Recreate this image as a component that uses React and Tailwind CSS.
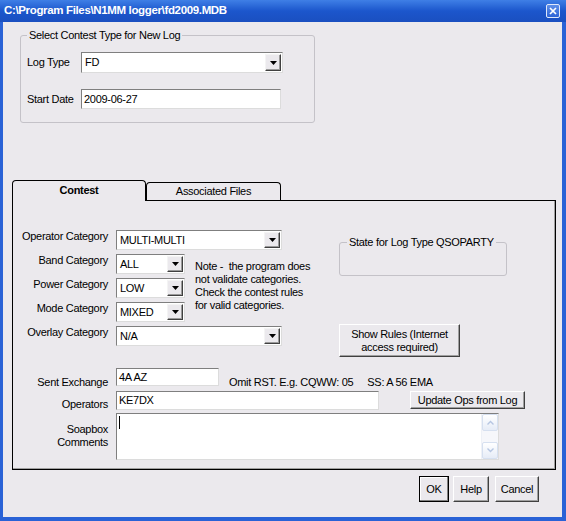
import React from "react";

// shared bevels
const sunken =
  "border border-t-[#7f7f7f] border-l-[#7f7f7f] border-r-[#dcdcdc] border-b-[#dcdcdc] bg-white";
const raised =
  "border border-t-white border-l-white border-r-[#404040] border-b-[#404040] bg-[#ebe9ed] shadow-[inset_-1px_-1px_0_#a0a0a0]";

function DropArrow() {
  return (
    <div className="my-[1px] mr-[1px] flex w-[16px] items-center justify-center border border-t-[#f4f4f4] border-l-[#f4f4f4] border-r-[#404040] border-b-[#404040] bg-[#ebe9ed] shadow-[inset_-1px_-1px_0_#9a9a9a]">
      <svg width="7" height="4" viewBox="0 0 7 4">
        <path d="M0 0h7L3.5 4z" fill="#000" />
      </svg>
    </div>
  );
}

function Combo({ value, className }) {
  return (
    <div className={`flex ${sunken} ${className}`}>
      <div className="flex flex-1 items-center pl-[3px]">{value}</div>
      <DropArrow />
    </div>
  );
}

function Row({ label, children }) {
  return (
    <div className="flex items-start">
      <span className="w-[95px] text-right leading-[13px]">{label}</span>
      <div className="ml-[8px]">{children}</div>
    </div>
  );
}

function TitleBar() {
  return (
    <div className="flex h-[22px] items-center justify-between bg-gradient-to-b from-[#3f7fe6] via-[#1c56cc] to-[#1a4fc0] pl-[4px] pr-[6px]">
      <span className="text-[11.5px] font-bold tracking-[-0.35px] text-white">
        C:\Program Files\N1MM logger\fd2009.MDB
      </span>
      <div className="flex h-[14px] w-[14px] items-center justify-center rounded-[2px] border border-[#dfe8fa] bg-gradient-to-b from-[#5f8fe8] to-[#2d63d6]">
        <svg width="8" height="8" viewBox="0 0 8 8">
          <path d="M1 1l6 6M7 1l-6 6" stroke="#fff" strokeWidth="1.7" />
        </svg>
      </div>
    </div>
  );
}

function ScrollBox() {
  return (
    <div className="flex w-[17px] flex-col border-l border-[#eef1f7] bg-[#f6f7fb]">
      <div className="flex h-[17px] items-center justify-center rounded-[2px] border border-[#d6e0f0] bg-gradient-to-b from-white to-[#e6ecf7]">
        <svg width="7" height="5" viewBox="0 0 7 5">
          <path d="M0.5 4.5L3.5 1.5 6.5 4.5" stroke="#b6c6e2" strokeWidth="1.4" fill="none" />
        </svg>
      </div>
      <div className="flex-1" />
      <div className="flex h-[17px] items-center justify-center rounded-[2px] border border-[#d6e0f0] bg-gradient-to-b from-white to-[#e6ecf7]">
        <svg width="7" height="5" viewBox="0 0 7 5">
          <path d="M0.5 0.5L3.5 3.5 6.5 0.5" stroke="#b6c6e2" strokeWidth="1.4" fill="none" />
        </svg>
      </div>
    </div>
  );
}

export default function App() {
  return (
    <div className="flex h-[521px] w-[566px] flex-col font-['Liberation_Sans',Arial,sans-serif] text-[11px] tracking-[-0.3px] text-black">
      <TitleBar />
      <div className="flex flex-1 flex-col border-b-[4px] border-l-[3px] border-r-[4px] border-[#2a62d6] bg-[#ebe9ed]">
        {/* new log group */}
        <fieldset className="ml-[17px] mt-[7px] w-[295px] rounded-[3px] border border-[#c4c2c8] pb-[13px]">
          <legend className="ml-[6px] px-[2px] leading-[13px]">Select Contest Type for New Log</legend>
          <div className="flex flex-col pl-[6px] pt-[10px]">
            <div className="flex items-center">
              <span className="w-[54px]">Log Type</span>
              <Combo value="FD" className="h-[21px] w-[202px]" />
            </div>
            <div className="mt-[16px] flex items-center">
              <span className="w-[54px]">Start Date</span>
              <div className={`flex h-[20px] w-[200px] items-center pl-[2px] ${sunken}`}>2009-06-27</div>
            </div>
          </div>
        </fieldset>

        {/* tabs */}
        <div className="relative z-10 -mb-[1px] ml-[9px] mt-[57px] flex h-[21px] items-end">
          <div className="flex h-[21px] w-[134px] items-center justify-center rounded-t-[4px] border border-b-0 border-black bg-[#ebe9ed] pb-[1px] font-bold">
            Contest
          </div>
          <div className="mb-[1px] flex h-[18px] w-[135px] items-center justify-center rounded-t-[4px] border border-b-0 border-black bg-[#ebe9ed]">
            Associated Files
          </div>
        </div>

        <div className="ml-[9px] flex h-[270px] w-[544px] flex-col border border-black shadow-[inset_-1px_-1px_0_#a0a0a0]">
          <div className="flex pt-[29px]">
            <div className="flex w-[326px] flex-col gap-[4px]">
              <Row label="Operator Category">
                <Combo value="MULTI-MULTI" className="h-[20px] w-[166px]" />
              </Row>
              <div className="flex">
                <div className="flex flex-col gap-[4px]">
                  <Row label="Band Category">
                    <Combo value="ALL" className="h-[20px] w-[69px]" />
                  </Row>
                  <Row label="Power Category">
                    <Combo value="LOW" className="h-[20px] w-[69px]" />
                  </Row>
                  <Row label="Mode Category">
                    <Combo value="MIXED" className="h-[20px] w-[69px]" />
                  </Row>
                </div>
                <p className="ml-[10px] mt-[6px] whitespace-pre leading-[13px]">
                  {"Note -  the program does\nnot validate categories.\nCheck the contest rules\nfor valid categories."}
                </p>
              </div>
              <Row label="Overlay Category">
                <Combo value="N/A" className="h-[20px] w-[166px]" />
              </Row>
            </div>
            <div className="flex flex-col">
              <fieldset className="mt-[6px] h-[40px] w-[168px] rounded-[3px] border border-[#c4c2c8]">
                <legend className="ml-[7px] px-[2px] leading-[13px]">State for Log Type QSOPARTY</legend>
              </fieldset>
              <button className={`mt-[48px] h-[33px] w-[121px] leading-[13px] ${raised}`}>
                Show Rules (Internet
                <br />
                access required)
              </button>
            </div>
          </div>

          <div className="mt-[11px] flex h-[18px] items-start">
            <span className="mt-[8px] w-[95px] text-right leading-[13px]">Sent Exchange</span>
            <div className={`ml-[8px] flex h-[18px] w-[103px] items-center pl-[2px] ${sunken}`}>4A AZ</div>
            <span className="ml-[10px] mt-[8px] leading-[13px]">Omit RST. E.g. CQWW: 05</span>
            <span className="ml-[14px] mt-[8px] leading-[13px]">SS: A 56 EMA</span>
          </div>
          <div className="mt-[5px] flex h-[19px] items-start">
            <span className="mt-[7px] w-[95px] text-right leading-[13px]">Operators</span>
            <div className={`ml-[8px] flex h-[19px] w-[263px] items-center pl-[2px] ${sunken}`}>KE7DX</div>
            <button className={`ml-[31px] h-[18px] w-[115px] leading-[13px] ${raised}`}>Update Ops from Log</button>
          </div>
          <div className="mt-[3px] flex h-[47px] items-start">
            <span className="mt-[10px] w-[95px] text-right leading-[13px]">
              Soapbox
              <br />
              Comments
            </span>
            <div className={`ml-[8px] flex h-[47px] w-[383px] ${sunken}`}>
              <div className="flex-1 pl-[2px] pt-[2px]">
                <div className="h-[13px] w-[1px] bg-black" />
              </div>
              <ScrollBox />
            </div>
          </div>
        </div>

        {/* dialog buttons */}
        <div className="mr-[23px] mt-[6px] flex justify-end">
          <button className="h-[26px] w-[30px] border border-black bg-[#ebe9ed] shadow-[inset_-1px_-1px_0_#808080,inset_1px_1px_0_#fff]">
            OK
          </button>
          <button className={`ml-[4px] h-[26px] w-[36px] ${raised}`}>Help</button>
          <button className={`ml-[6px] h-[26px] w-[44px] ${raised}`}>Cancel</button>
        </div>
      </div>
    </div>
  );
}
